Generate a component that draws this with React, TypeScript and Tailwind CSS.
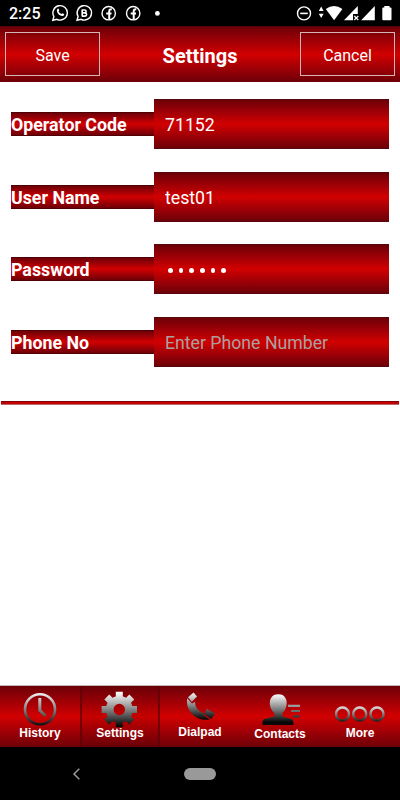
import { useState } from 'react';

const fields = [
  { label: 'Operator Code', value: '71152' },
  { label: 'User Name', value: 'test01' },
  { label: 'Password', value: 'secret', secret: true },
  { label: 'Phone No', value: '', placeholder: 'Enter Phone Number' },
];

const tabs = [
  { name: 'History', gap: 'pt-px' },
  { name: 'Settings', gap: 'pt-px' },
  { name: 'Dialpad', gap: 'pt-0' },
  { name: 'Contacts', gap: 'pt-[2px]' },
  { name: 'More', gap: 'pt-px' },
];

// top and bottom of each icon's metallic gradient
const shine: Record<string, [number, number]> = {
  History: [5, 40],
  Settings: [6, 40],
  Dialpad: [5, 33],
  Contacts: [8, 36],
  More: [18, 37],
};

function StatusBar() {
  return (
    <div className="flex h-[26px] items-center justify-between bg-black pl-[9px] pr-[8px] text-white">
      <div className="flex items-center">
        <span className="w-[43px] pt-[2px] text-[16px] font-medium leading-none">2:25</span>
        <svg className="h-[18px] w-[116px]" viewBox="0 0 116 18" fill="none" stroke="#fff" strokeWidth="1.4">
          {/* WhatsApp */}
          <path d="M.8 16.3 1.9 12.5A7.2 7.2 0 1 1 4.9 15.3Z" />
          <path d="M5.2 5.2c.7-.9 1.3-.8 1.6 0l.5 1.3-.7 1c.7 1.3 1.5 2 2.8 2.6l1-.9 1.6.8c.4.3.2 1.2-.6 1.7-3 1.4-7.6-3.2-6.2-6.5Z" fill="#fff" stroke="none" />
          {/* WhatsApp Business */}
          <path d="M25 16.3 26.1 12.5A7.2 7.2 0 1 1 29.1 15.3Z" />
          <path d="M30.2 5.4v7.2M30 6h2.6a1.4 1.4 0 0 1 0 2.9H30h3a1.6 1.6 0 0 1 0 3.2h-3" strokeWidth="1.6" />
          {/* Facebook */}
          <circle cx="56.7" cy="9.2" r="6.7" />
          <path d="M57.2 15.5V7.2q0-2.2 2.6-1.8M54.2 9.4h5.3" strokeWidth="2" />
          <circle cx="81.2" cy="9.2" r="6.7" />
          <path d="M81.7 15.5V7.2q0-2.2 2.6-1.8M78.7 9.4H84" strokeWidth="2" />
          <circle cx="105.4" cy="9.4" r="2.4" fill="#fff" stroke="none" />
        </svg>
      </div>
      <svg className="h-[18px] w-[96px]" viewBox="0 0 96 18" fill="#fff">
        <circle cx="8" cy="9.4" r="6.5" fill="none" stroke="#fff" strokeWidth="1.4" />
        <path d="M4.2 8.6h7.6v1.6H4.2z" />
        <path d="m25.2 2.5 2.4 4.5h-4.8zM25.2 14l2.4-4.3h-4.8z" />
        <path d="M29.8 5.1Q38 -1.2 46.4 5.1L38.1 16.3Z" />
        <path d="M61.8 2v8H57v6.3H48zM78.8 2v14.3H65.2z" />
        <path d="m58.3 12 4 4m0-4-4 4" stroke="#fff" strokeWidth="1.2" />
        <path d="M88.3 3.5V2h5.2v1.5h1q1 0 1 1v10.8q0 1-1 1h-7.2q-1 0-1-1V4.5q0-1 1-1z" />
      </svg>
    </div>
  );
}

function Header() {
  const button =
    'h-[44px] w-[95px] border border-[#d5b5b5] pt-[3px] text-center text-[16px] leading-none text-white';
  return (
    <header className="flex h-14 items-start justify-between border-t border-[#500004] bg-linear-to-b from-[#6e0007] via-[#d20000] to-[#6e0007] px-[5px] pt-[5px]">
      <button className={button}>Save</button>
      <h1 className="text-[20px] font-bold leading-[48px] text-white">Settings</h1>
      <button className={button}>Cancel</button>
    </header>
  );
}

function SettingsForm() {
  const [values, setValues] = useState(fields.map((field) => field.value));

  return (
    <div className="flex flex-col gap-[22.6px] px-[11px] pt-[17.3px]">
      {fields.map((field, i) => (
        <label key={field.label} className="flex h-[50px] items-center">
          <span className="h-6 w-[143px] border-y border-[#500004] bg-linear-to-b from-[#6e0007] via-[#d20000] to-[#6e0007] text-[17.8px] font-bold leading-[24px] text-white">
            {field.label}
          </span>
          <span className="flex h-[50px] flex-1 items-center border-y border-[#58080c] bg-linear-to-b from-[#6e0007] via-[#d20000] to-[#6e0007] pl-[11px]">
            {field.secret ? (
              <span className="flex gap-[6.1px] pl-[3px] pt-[2px]">
                {values[i].split('').map((_, n) => (
                  <span key={n} className="size-[4.6px] rounded-full bg-white" />
                ))}
              </span>
            ) : (
              <input
                className="w-full bg-transparent pt-[2px] text-[17.7px] leading-none text-white outline-none placeholder:text-[#aaa0a0]"
                value={values[i]}
                placeholder={field.placeholder}
                onChange={(e) => setValues(values.map((v, n) => (n === i ? e.target.value : v)))}
              />
            )}
          </span>
        </label>
      ))}
    </div>
  );
}

function TabIcon({ name }: { name: string }) {
  const [top, bottom] = shine[name];
  return (
    <svg className="h-[38px] w-20 shrink-0 overflow-visible" viewBox="0 0 80 38" fill="none">
      <defs>
        <linearGradient id={`metal-${name}`} gradientUnits="userSpaceOnUse" x1="0" y1={top} x2="0" y2={bottom}>
          <stop offset="0" stopColor="#fff" />
          <stop offset=".5" stopColor="#888" />
          <stop offset="1" stopColor="#080808" />
        </linearGradient>
      </defs>
      {name === 'History' && (
        <g stroke="url(#metal-History)">
          <circle cx="40" cy="23.3" r="15" strokeWidth="2.6" />
          <path d="M39.8 12v12.3l5.7 5.5" strokeWidth="3" />
        </g>
      )}
      {name === 'Settings' && (
        <g stroke="url(#metal-Settings)">
          <circle cx="39.3" cy="23.5" r="9.6" strokeWidth="7.8" />
          <path
            d="M39.3 5.8v6M39.31 35.2v6M21.6 23.5h6M51 23.51h6M26.8 11l4 4M47.8 32l4 4M51.8 11l-4 4M30.8 32l-4 4"
            strokeWidth="7"
          />
        </g>
      )}
      {name === 'Dialpad' && (
        <g fill="url(#metal-Dialpad)">
          <path d="m28 11.2 5.5-4.7 3.6 4-5.3 5.3Z" />
          <path d="m27.2 12.2 4.8 5.2 3.2-1.6c-.6 5 3.2 9.8 8.6 11.2l-.4 2 6.2 4.6c-12.6 2-24.600-8.300-22.400-21.400Z" />
          <path d="m46.800 22.800 8.400 4.700-4 5.500-7-4.600Z" />
        </g>
      )}
      {name === 'Contacts' && (
        <g fill="url(#metal-Contacts)">
          <path d="M38.5 8.3c10.500 0 10 14 4 18.700v3.500l9 2.500q2 1 2 6H22.300q0-5 2-6l10-2.500V27c-6-4.700-7-18.700 4-18.700Z" />
          <path d="M48 18.800h12V21H48zM51 23.900h9v2.200h-9zM53 29.200h6.500v2.200H53z" />
        </g>
      )}
      {name === 'More' && (
        <g stroke="url(#metal-More)" strokeWidth="2.4">
          <circle cx="22.5" cy="28" r="6.5" />
          <circle cx="39.7" cy="28" r="6.5" />
          <circle cx="57" cy="28" r="6.5" />
        </g>
      )}
    </svg>
  );
}

function TabBar() {
  return (
    <nav className="flex h-[62px] border-t border-[#c4b4b4] bg-linear-to-b from-[#6e0007] via-[#d20000] to-[#6e0007]">
      {tabs.map((tab) => (
        <button
          key={tab.name}
          className={`flex w-20 flex-col items-center font-['Liberation_Sans',sans-serif] text-[12px] font-bold leading-[16px] text-white ${
            tab.name === 'Settings' ? 'border-x-2 border-[#5c0005]/70 bg-black/5' : ''
          }`}
        >
          <TabIcon name={tab.name} />
          <span className={tab.gap}>{tab.name}</span>
        </button>
      ))}
    </nav>
  );
}

export default function App() {
  return (
    <div className="flex h-[800px] w-[400px] flex-col overflow-hidden bg-white font-[Roboto,sans-serif]">
      <StatusBar />
      <Header />
      <main className="flex-1">
        <SettingsForm />
        <div className="mx-px mt-[33.9px] h-[4px] border-y border-t-[#800004] border-b-[#b86a6c] bg-[#c40000]" />
      </main>
      <TabBar />
      <div className="flex h-[53px] items-center bg-black pl-[72px]">
        <svg className="h-3 w-2" viewBox="0 0 8 12" fill="none" stroke="#999" strokeWidth="1.5">
          <path d="M7.3.8 2 6l5.3 5.2" />
        </svg>
        <div className="ml-[104px] h-3 w-8 rounded-full bg-[#999]" />
      </div>
    </div>
  );
}
